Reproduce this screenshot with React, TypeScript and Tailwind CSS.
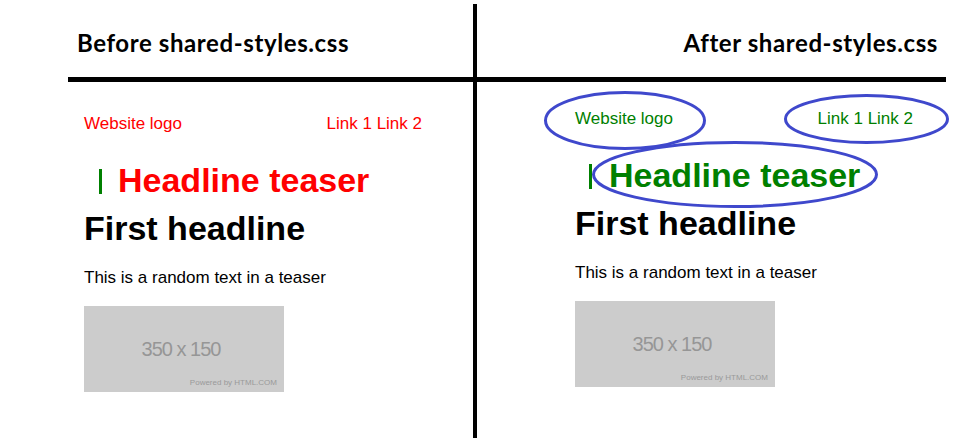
import React from "react";

const arial = { fontFamily: '"Liberation Sans", Arial, sans-serif' };
const lato = { fontFamily: 'Lato, "Open Sans", sans-serif' };

function Placeholder() {
  return (
    <div className="w-[200px] h-[86px] bg-[#cccccc] flex flex-col" style={arial}>
      <div className="flex-1 flex items-start justify-center pt-[31px] pr-[6px] text-[20px] leading-[24px] tracking-[-1px] text-[#969696]">
        350 x 150
      </div>
      <div className="flex justify-end pr-[7px] pb-[4px] text-[8px] leading-[10px] text-[#9a9a9a]">
        Powered by HTML.COM
      </div>
    </div>
  );
}

function Content({
  color,
  barOffset,
  barGap,
  top,
}: {
  color: string;
  barOffset: string;
  barGap: string;
  top: string;
}) {
  return (
    <div className={`w-[338px] ${top}`} style={arial}>
      <div className={`flex justify-between text-[17px] leading-[20px] ${color}`}>
        <span>Website logo</span>
        <span>Link 1 Link 2</span>
      </div>
      <div className="flex items-start mt-[26px] h-[40px]">
        <div className={`w-[3px] h-[25px] bg-[#008000] mt-[9px] ${barOffset}`} />
        <h2 className={`text-[34px] leading-[40px] font-bold ${color} ${barGap}`}>Headline teaser</h2>
      </div>
      <h1 className="mt-[8px] text-[34px] leading-[40px] font-bold text-black">First headline</h1>
      <p className="mt-[20px] text-[17px] leading-[20px] text-black">This is a random text in a teaser</p>
      <div className="mt-[18px]">
        <Placeholder />
      </div>
    </div>
  );
}

export default function App() {
  return (
    <div className="relative w-[967px] h-[438px] bg-white overflow-hidden flex">
      <div className="w-[473px] pl-[68px]">
        <div className="h-[82px] border-b-[5px] border-black pl-[9px] pt-[29px]">
          <div className="text-[24px] leading-[28px] tracking-[0.6px] font-bold text-black" style={lato}>
            Before shared-styles.css
          </div>
        </div>
        <div className="pl-[16px]">
          <Content color="text-[#ff0000]" barOffset="ml-[15px]" barGap="ml-[16px]" top="mt-[32px]" />
        </div>
      </div>
      <div className="w-[4px] mt-[4px] bg-black" />
      <div className="w-[469px]">
        <div className="h-[82px] border-b-[5px] border-black pr-[8px] pt-[29px] flex justify-end">
          <div className="text-[24px] leading-[28px] tracking-[0.6px] font-bold text-black" style={lato}>
            After shared-styles.css
          </div>
        </div>
        <div className="pl-[98px]">
          <Content color="text-[#008000]" barOffset="ml-[14px]" barGap="ml-[17px]" top="mt-[27px]" />
        </div>
      </div>
      <svg
        className="absolute left-0 top-0 pointer-events-none"
        width="967"
        height="438"
        viewBox="0 0 967 438"
        fill="none"
      >
        <g stroke="#3f48cc" strokeWidth="3">
          <ellipse cx="625" cy="120.5" rx="79.5" ry="28" />
          <ellipse cx="866.5" cy="119" rx="81" ry="23.5" />
          <ellipse cx="735" cy="174.5" rx="141.5" ry="32" />
        </g>
      </svg>
    </div>
  );
}
